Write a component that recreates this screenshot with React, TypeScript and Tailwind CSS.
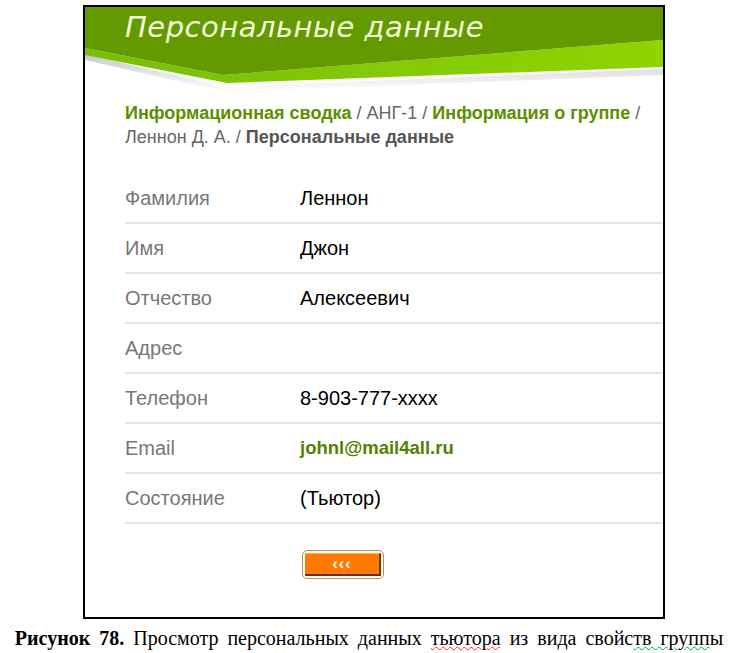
import React from 'react';

interface Field {
  label: string;
  value: string;
  link?: boolean;
}

const fields: Field[] = [
  { label: 'Фамилия', value: 'Леннон' },
  { label: 'Имя', value: 'Джон' },
  { label: 'Отчество', value: 'Алексеевич' },
  { label: 'Адрес', value: '' },
  { label: 'Телефон', value: '8-903-777-xxxx' },
  { label: 'Email', value: 'johnl@mail4all.ru', link: true },
  { label: 'Состояние', value: '(Тьютор)' },
];

function HeaderWave() {
  return (
    <svg width="578" height="92" viewBox="0 0 578 92" className="absolute inset-0">
      <defs>
        <linearGradient id="band" x1="0" y1="0" x2="1" y2="0">
          <stop offset="0" stopColor="#78be0a" />
          <stop offset="1" stopColor="#8fd400" />
        </linearGradient>
        <linearGradient id="shade" x1="0" y1="0" x2="0" y2="1">
          <stop offset="0" stopColor="#c9c9c9" />
          <stop offset="1" stopColor="#ffffff" />
        </linearGradient>
      </defs>
      <polygon points="0,47 140,80 578,62 578,68 140,85 0,53" fill="url(#shade)" />
      <polygon points="0,41 138,68 578,33 578,60 142,76 0,48" fill="url(#band)" />
      <polygon points="0,0 578,0 578,33 138,68 0,41" fill="#639a00" />
    </svg>
  );
}

export default function App() {
  return (
    <div className="w-[738px] h-[653px] bg-white pt-[5px]" style={{ fontFamily: '"Liberation Sans", Arial, sans-serif' }}>
      <div className="ml-[83px] w-[582px] h-[614px] border-2 border-black">
        <div className="relative h-[92px]">
          <HeaderWave />
          <h1
            className="relative pl-[40px] pt-[2px] text-[29px] italic leading-[36px] text-[#f3fadc] tracking-[0.5px]"
            style={{ fontFamily: '"DejaVu Sans", sans-serif' }}
          >
            Персональные данные
          </h1>
        </div>

        <div className="pl-[40px] mt-[2px]">
          <div className="text-[18px] leading-[24px] text-[#666] whitespace-nowrap">
            <span className="font-bold text-[#5a8f00]">Информационная сводка</span>
            <span> / АНГ-1 / </span>
            <span className="font-bold text-[#5a8f00]">Информация о группе</span>
            <span> /</span>
            <br />
            <span>Леннон Д. А. / </span>
            <span className="font-bold text-[#555]">Персональные данные</span>
          </div>

          <div className="mt-[25px]">
            {fields.map((f) => (
              <div key={f.label} className="flex items-center h-[50px] border-b-2 border-[#e4e4e4] text-[20px]">
                <div className="w-[175px] text-[#777]">{f.label}</div>
                <div className={f.link ? 'font-bold text-[18.5px] text-[#4f8200]' : 'text-black'}>{f.value}</div>
              </div>
            ))}
          </div>

          <div className="pl-[177px] pt-[26px]">
            <button className="w-[82px] h-[29px] rounded-[5px] border border-[#c98a45] p-[2px] bg-white">
              <div className="h-full bg-[#ff7a00] border-t border-t-[#ffae5c] border-b-2 border-b-[#6e3000] border-r-2 border-r-[#7a3600] flex items-center justify-center text-white font-bold text-[16px] leading-none tracking-[1px]">
                ‹‹‹
              </div>
            </button>
          </div>
        </div>
      </div>

      <p
        className="mt-[8px] text-center text-[20px] leading-[22px] text-black whitespace-nowrap [word-spacing:4px]"
        style={{ fontFamily: '"Liberation Serif", "Times New Roman", serif' }}
      >
        <span className="font-bold">Рисунок 78.</span> Просмотр персональных данных{' '}
        <span className="underline decoration-wavy decoration-red-500 decoration-1">тьютора</span> из вида свойс
        <span className="underline decoration-wavy decoration-green-600 decoration-1">тв групп</span>ы
      </p>
    </div>
  );
}
